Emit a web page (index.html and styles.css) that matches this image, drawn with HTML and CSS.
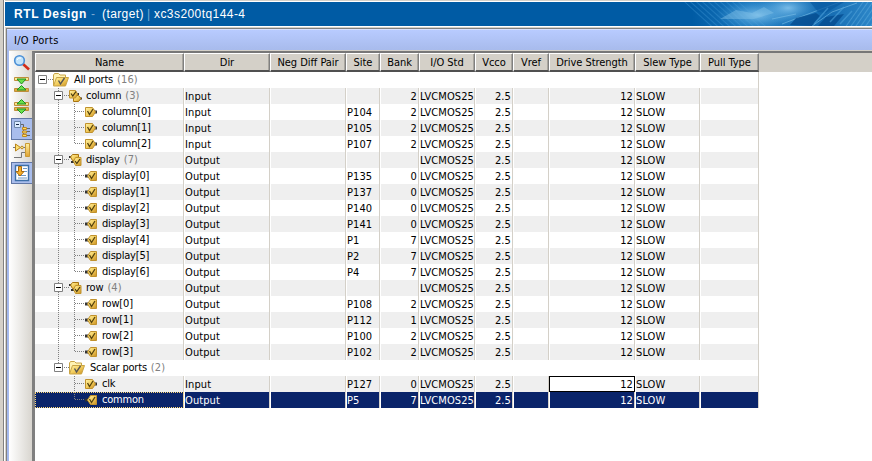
FILE: index.html
```
<!DOCTYPE html>
<html lang="en">
<head>
<meta charset="utf-8">
<title>RTL Design</title>
<link rel="stylesheet" href="styles.css">
</head>
<body>
<svg class="defs" width="0" height="0">
  <defs>
    <linearGradient id="gold" x2="1" y2="1"><stop offset="0" stop-color="#fff3a8"/><stop offset=".5" stop-color="#f3cd5c"/><stop offset="1" stop-color="#c98f22"/></linearGradient>
    <linearGradient id="bar" x2="0" y2="1"><stop offset="0" stop-color="#fff0a0"/><stop offset="1" stop-color="#e0a232"/></linearGradient>
    <symbol id="in" viewBox="0 0 13 12"><path d="M9 4.500h3v3H9z" fill="#333"/><path d="M.5 1.500h7l3 4.500-3 4.500h-7z" fill="url(#gold)" stroke="#c0922e"/><path d="M2.500 5l2 3.500L8 3" fill="none" stroke="#55430f" stroke-width="1.300"/></symbol>
    <symbol id="out" viewBox="0 0 13 12"><path d="M0 4.500h4v3H0z" fill="#333"/><path d="M11.500 1.500h-6L2.500 6l3 4.500h6z" fill="url(#gold)" stroke="#c0922e"/><path d="M4.500 5l2 3.500L10 3" fill="none" stroke="#55430f" stroke-width="1.300"/></symbol>
    <symbol id="ins" viewBox="0 0 13 12"><path d="M7 3h3v2H7zM10 7.500h3v2h-3z" fill="#333"/><path d="M4.500 5.500h5l2.500 3-2.500 3h-5z" fill="url(#gold)" stroke="#a87410"/><path d="M.5.500h6l2 3.500-2 4h-6z" fill="url(#gold)" stroke="#c0922e"/><path d="M2 3.500l1.800 2.500L7 1.500" fill="none" stroke="#44360f" stroke-width="1.200"/></symbol>
    <symbol id="outs" viewBox="0 0 13 12"><path d="M0 2h3v2H0zM2 7h3v2H2z" fill="#333"/><path d="M9.500.500h-6L1.500 3l2 3.500h6z" fill="url(#gold)" stroke="#a87410"/><path d="M12 3.500H6.500l-2 4 2 4H12z" fill="url(#gold)" stroke="#c0922e"/><path d="M6 7l1.800 2.500L11 5" fill="none" stroke="#44360f" stroke-width="1.200"/></symbol>
    <symbol id="folder" viewBox="0 0 16 14"><path d="M.5 12.500V2l1-1.500h4L7 2h5.500v3" fill="#fff3b4" stroke="#c9a446"/><path d="M.5 13l3-8.500h12l-3 8.500z" fill="url(#gold)" stroke="#c9a446"/><path d="M5.500 7.500l2 3.500 4-6" fill="none" stroke="#555" stroke-width="1.400"/></symbol>
  </defs>
</svg>
<div class="window">
  <div class="banner">
    <div class="title"><b>RTL Design</b><i class="dash">-</i><span class="target">(target)</span><i class="pipe">|</i><span class="part">xc3s200tq144-4</span></div>
    <svg class="art" width="200" height="24" viewBox="0 0 200 24">
      <defs>
        <linearGradient id="fade"><stop offset="0" stop-color="#005ba4"/><stop offset=".1" stop-color="#005ba4"/><stop offset=".4" stop-color="#1c79bf"/><stop offset=".75" stop-color="#1268ae"/><stop offset="1" stop-color="#2c86c8"/></linearGradient>
        <radialGradient id="glow"><stop offset="0" stop-color="#79bce8"/><stop offset="1" stop-color="#3b94d2" stop-opacity="0"/></radialGradient>
        <pattern id="hatch" width="4" height="4" patternUnits="userSpaceOnUse" patternTransform="rotate(-48)"><path d="M0 0v4" stroke="#3f97d6" stroke-width="1.800"/></pattern>
        <pattern id="hatch2" width="4" height="4" patternUnits="userSpaceOnUse" patternTransform="rotate(35)"><path d="M0 0v4" stroke="#72bde9" stroke-width="1.500"/></pattern>
      </defs>
      <rect width="200" height="24" fill="url(#fade)"/>
      <path d="M12 0h56l26 24H36z" fill="url(#hatch)" opacity=".45"/>
      <ellipse cx="86" cy="13" rx="42" ry="16" fill="url(#glow)"/>
      <ellipse cx="116" cy="6" rx="34" ry="16" fill="url(#glow)"/>
      <path d="M48 17L64 8l16 3 12-6 10 6-20 6z" fill="#8cc7ec" opacity=".4"/>
      <path d="M110 22l34-13 24-9M140 24l20-14 25-9M100 17l24-5" fill="none" stroke="#7fc2ea" opacity=".55"/>
      <path d="M118 23l6-7 20-5 4 3-8 10zM146 24l8-9 18-3-10 12z" fill="#054c90" opacity=".8"/>
      <path d="M138 0h34l-18 11-8-1z" fill="#0a5ba3" opacity=".7"/>
      <path d="M172 24l16-24h12v24z" fill="url(#hatch2)" opacity=".5"/>
      <path d="M142 22l14-16M158 20l14-15M168 22l12-13" stroke="#4ba0da" stroke-width="1.500" opacity=".6"/>
    </svg>
  </div>
  <div class="panel">
    <div class="caption">I/O Ports</div>
    <div class="body">
      <div class="tools">
        <div class="tool"><svg width="18" height="18"><path d="M10 10l6 5.500" stroke="#d22c18" stroke-width="2.600"/><circle cx="6.500" cy="6.500" r="4.800" fill="#c3e4fb" stroke="#4a8fd6" stroke-width="1.600"/><path d="M4 6q1-3 4-2" stroke="#fff" fill="none"/></svg></div>
        <div class="tool"><svg width="18" height="18"><path d="M1.500 1.500h14v3h-14zM1.500 12.500h14v3h-14z" fill="url(#bar)" stroke="#bd8f3a"/><path d="M4 3h9l-4.500 5zM4 14h9L8.500 9.500z" fill="#6be04a" stroke="#1d8f22"/></svg></div>
        <div class="tool"><svg width="18" height="18"><path d="M1.500 4.500h14v3h-14zM1.500 9.500h14v3h-14z" fill="url(#bar)" stroke="#bd8f3a"/><path d="M4 6h9L8.500 1.500zM4 11h9l-4.500 4.500z" fill="#6be04a" stroke="#1d8f22"/></svg></div>
        <div class="tool on"><svg width="18" height="18"><path d="M7 4.500h3.500v10M10.500 8.500H17M10.500 11.500H17M10.500 15.500H17" fill="none" stroke="#666"/><path d="M1.500 1.500h6v6h-6z" fill="#dcebff" stroke="#6d86a8"/><path d="M3 4.500h3" stroke="#124"/><path d="M9.500 7.500h4v2h-4zM9.500 11h4v2h-4zM9.500 14.500h4v2h-4z" fill="#ffdc60" stroke="#c08a22"/></svg></div>
        <div class="tool"><svg width="18" height="18"><path d="M0 5.500h12M1 15.500h7.500v-5H12" fill="none" stroke="#777"/><path d="M2.500 2v7l5-3.500z" fill="#ffe272" stroke="#b98418"/><circle cx="9" cy="5.500" r="1.300" fill="#fff2a0" stroke="#b98418"/><path d="M12.500 1.500h4v13h-4z" fill="url(#bar)" stroke="#c99a35"/></svg></div>
        <div class="tool on"><svg width="18" height="18"><path d="M2.500 1.500h13v15h-13z" fill="#fff" stroke="#3d6fa8" stroke-width="1.400"/><path d="M10 4.500h4M10 7.500h4M5 11.500h8M5 14h9" stroke="#6d98c6"/><path d="M5.500 2.500h3v5h2.500L7 12 3 7.500h2.500z" fill="#f5ad26" stroke="#a86a10"/></svg></div>
      </div>
      <div class="table" id="table"></div>
    </div>
  </div>
</div>
<script src="script.js"></script>
</body>
</html>
```
FILE: styles.css
```
* { box-sizing: border-box; }
body { margin: 0; width: 872px; height: 461px; overflow: hidden; background: #d4d0c8; font: 11px/16px "DejaVu Sans Condensed", "DejaVu Sans", sans-serif; font-stretch: condensed; color: #000; }
.defs { position: absolute; }
svg { display: block; flex: none; }
.window { height: 461px; margin-left: 3px; border-left: 1px solid #808080; box-shadow: inset 1px 0 #fff; padding: 1px 0 0 1px; }
.banner { height: 26px; display: flex; justify-content: space-between; background: #005ba4; border-top: 1px solid #fff; border-bottom: 1px solid #fff; }
.title { display: flex; align-items: center; padding-left: 9px; color: #fff; font: 12px/24px "Liberation Sans", sans-serif; white-space: pre; }
.title b { width: 77px; letter-spacing: .65px; }
.title i { font-style: normal; color: #7aa9d0; }
.dash { width: 11px; }
.target { width: 45px; letter-spacing: .4px; }
.pipe { width: 7px; }
.part { letter-spacing: .43px; }
.panel { margin-left: 1px; margin-top: 1px; height: 433px; border-left: 1px solid #808080; border-top: 1px solid #808080; display: flex; flex-direction: column; background: #a4b9ed; }
.caption { height: 21px; flex: none; border-top: 1px solid #d7e1ff; background: linear-gradient(#b8cbff, #a8bbec); padding-left: 7px; line-height: 21px; letter-spacing: .3px; }
.body { flex: 1; display: flex; margin-left: 2px; border-top: 1px solid #d4d0c8; }
.tools { width: 23px; flex: none; background: linear-gradient(90deg, #fff, #d8d5cf); padding-top: 1px; }
.tool { width: 22px; height: 22px; margin-left: 2px; display: flex; align-items: center; justify-content: center; }
.tool.on { background: #a9bdec; border: 1px solid #6177a6; }
.table { flex: 1; background: #fff; border-left: 3px solid #808080; border-top: 2px solid #777; }
.row { display: grid; grid-template-columns: 149px 86px 76px 34px 39px 56px 38px 36px 86px 65px 59px; width: 724px; height: 16px; }
.head { width: 100%; height: 19px; background: #d4d0c8; }
.th { text-align: center; line-height: 18px; border: 1px solid #808080; border-left-color: #fff; border-top-color: #fff; border-bottom: 2px solid #505050; white-space: nowrap; overflow: hidden; box-shadow: inset -1px 0 #a9a69f; letter-spacing: -.05px; }
.th span { display: block; }
.row.group { border-right: 1px solid #d4d0c8; }
.cell { border-right: 1px solid #d4d0c8; border-left: 1px solid #fff; white-space: nowrap; overflow: hidden; padding-left: 0; line-height: 18px; letter-spacing: .1px; }
.cell.num { text-align: right; padding: 0 1px 0 0; }
.odd .cell { background: #efefef; background-clip: padding-box; }
.sel .cell { background: #0a246a; background-clip: padding-box; color: #fff; }
.cell.edit { background: #fff; border: 1px solid #000; line-height: 16px; }
.cell.name { display: flex; align-items: center; border-left: 0; padding: 0; letter-spacing: -.2px; }
.name .label { margin-left: 5px; line-height: 14px; }
.port .label { margin-left: 4px; }
.name .count { color: #808080; margin-left: 4px; line-height: 14px; letter-spacing: .1px; }
.sel .name { outline: 1px dotted #ffd977; outline-offset: -1px; }
```
FILE: script.js
```
const columns = ["Name", "Dir", "Neg Diff Pair", "Site", "Bank", "I/O Std", "Vcco", "Vref", "Drive Strength", "Slew Type", "Pull Type"];
// depth, icon, label, count, direction, site, bank, last child
const ports = [
  [0, "folder", "All ports", 16],
  [1, "ins", "column", 3, "Input", "", "2"],
  [2, "in", "column[0]", 0, "Input", "P104", "2"],
  [2, "in", "column[1]", 0, "Input", "P105", "2"],
  [2, "in", "column[2]", 0, "Input", "P107", "2", true],
  [1, "outs", "display", 7, "Output", "", ""],
  [2, "out", "display[0]", 0, "Output", "P135", "0"],
  [2, "out", "display[1]", 0, "Output", "P137", "0"],
  [2, "out", "display[2]", 0, "Output", "P140", "0"],
  [2, "out", "display[3]", 0, "Output", "P141", "0"],
  [2, "out", "display[4]", 0, "Output", "P1", "7"],
  [2, "out", "display[5]", 0, "Output", "P2", "7"],
  [2, "out", "display[6]", 0, "Output", "P4", "7", true],
  [1, "outs", "row", 4, "Output", "", ""],
  [2, "out", "row[0]", 0, "Output", "P108", "2"],
  [2, "out", "row[1]", 0, "Output", "P112", "1"],
  [2, "out", "row[2]", 0, "Output", "P100", "2"],
  [2, "out", "row[3]", 0, "Output", "P102", "2", true],
  [1, "folder", "Scalar ports", 2],
  [2, "in", "clk", 0, "Input", "P127", "0"],
  [2, "out", "common", 0, "Output", "P5", "7", true]
];

function guides(depth, last, index) {
  let s = "";
  const line = (d) => `<path d="${d}" fill="none" stroke="#808080" stroke-dasharray="1 1"/>`;
  if (depth === 1) s += line(index === 18 ? "M23.5 0V8" : "M23.5 0V16") + line("M29 7.5H34");
  if (depth === 2) {
    if (index < 18) s += line("M23.5 0V16");
    s += line(last ? "M39.5 0V8" : "M39.5 0V16") + line("M40 7.5H50");
  }
  if (depth === 0) s += line("M13 7.5H18");
  if (depth < 2) {
    const x = 3.5 + depth * 16;
    s += `<path d="M${x} 3.5h8v8h-8z" fill="#fff" stroke="#808080"/><path d="M${x + 1.5} 7.5h5" stroke="#000"/>`;
  }
  const w = [18, 34, 50][depth];
  return `<svg width="${w}" height="16">${s}</svg>`;
}

let html = `<div class="row head">${columns.map(c => `<div class="th"><span>${c}</span></div>`).join("")}</div>`;
ports.forEach(([depth, icon, label, count, dir, site, bank, last], i) => {
  const size = icon === "folder" ? [16, 14] : [13, 12];
  const name = `<div class="cell name ${dir ? "port" : ""}"${dir ? "" : ' style="border-right-color:transparent"'}>${guides(depth, last, i)}<svg width="${size[0]}" height="${size[1]}"><use href="#${icon}"/></svg><span class="label">${label}</span>${count ? `<span class="count">(${count})</span>` : ""}</div>`;
  const td = (v, c = "") => `<div class="cell ${c}">${v}</div>`;
  const rest = dir ? td(dir) + td("") + td(site) + td(bank, "num") + td("LVCMOS25") + td("2.5", "num") + td("") + td("12", i === 19 ? "num edit" : "num") + td("SLOW") + td("") : "";
  html += `<div class="row ${dir ? "" : "group"} ${i === 20 ? "sel" : i % 2 ? "odd" : ""}">${name}${rest}</div>`;
});
document.getElementById("table").innerHTML = html;
```
